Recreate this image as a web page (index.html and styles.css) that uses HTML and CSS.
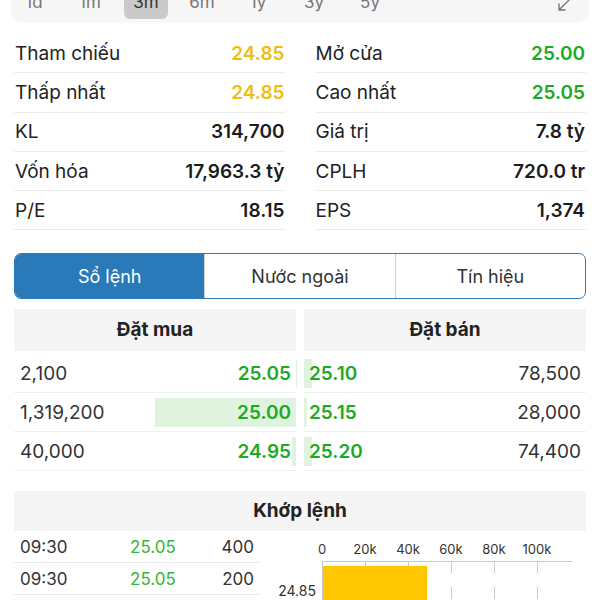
FILE: index.html
```html
<!DOCTYPE html>
<html lang="vi">
<head>
    <meta charset="UTF-8">
    <meta name="viewport" content="width=device-width, initial-scale=1.0">
    <title>Chi tiết cổ phiếu</title>
    <link rel="stylesheet" href="styles.css">
</head>
<body>
    <div class="period-bar">
        <span class="period">1d</span>
        <span class="period">1m</span>
        <span class="period active">3m</span>
        <span class="period">6m</span>
        <span class="period">1y</span>
        <span class="period">3y</span>
        <span class="period">5y</span>
        <span class="expand">
            <svg width="16" height="16" viewBox="0 0 16 16">
                <path d="M14 2 L3 13 M3 7 L3 13 L9 13" fill="none" stroke="#777" stroke-width="1.4" stroke-linecap="round" stroke-linejoin="round"/>
            </svg>
        </span>
    </div>

    <div class="stats">
        <div class="stat"><span class="label">Tham chiếu</span><span class="value ref">24.85</span></div>
        <div class="stat"><span class="label">Mở cửa</span><span class="value up">25.00</span></div>
        <div class="stat"><span class="label">Thấp nhất</span><span class="value ref">24.85</span></div>
        <div class="stat"><span class="label">Cao nhất</span><span class="value up">25.05</span></div>
        <div class="stat"><span class="label">KL</span><span class="value">314,700</span></div>
        <div class="stat"><span class="label">Giá trị</span><span class="value">7.8 tỷ</span></div>
        <div class="stat"><span class="label">Vốn hóa</span><span class="value">17,963.3 tỷ</span></div>
        <div class="stat"><span class="label">CPLH</span><span class="value">720.0 tr</span></div>
        <div class="stat"><span class="label">P/E</span><span class="value">18.15</span></div>
        <div class="stat"><span class="label">EPS</span><span class="value">1,374</span></div>
    </div>

    <div class="tabs">
        <div class="tab active">Sổ lệnh</div>
        <div class="tab">Nước ngoài</div>
        <div class="tab">Tín hiệu</div>
    </div>

    <div class="order-book">
        <div class="side bid">
            <div class="side-header">Đặt mua</div>
            <div class="order"><span class="bar" style="width: 0.1%"></span><span class="qty">2,100</span><span class="price">25.05</span></div>
            <div class="order"><span class="bar" style="width: 50%"></span><span class="qty">1,319,200</span><span class="price">25.00</span></div>
            <div class="order"><span class="bar" style="width: 1.5%"></span><span class="qty">40,000</span><span class="price">24.95</span></div>
        </div>
        <div class="side ask">
            <div class="side-header">Đặt bán</div>
            <div class="order"><span class="bar" style="width: 3%"></span><span class="price">25.10</span><span class="qty">78,500</span></div>
            <div class="order"><span class="bar" style="width: 1.1%"></span><span class="price">25.15</span><span class="qty">28,000</span></div>
            <div class="order"><span class="bar" style="width: 2.8%"></span><span class="price">25.20</span><span class="qty">74,400</span></div>
        </div>
    </div>

    <div class="matched">
        <div class="matched-header">Khớp lệnh</div>
        <div class="matched-body">
            <div class="trades">
                <div class="trade"><span>09:30</span><span class="trade-price">25.05</span><span class="trade-vol">400</span></div>
                <div class="trade"><span>09:30</span><span class="trade-price">25.05</span><span class="trade-vol">200</span></div>
            </div>
            <svg class="volume-chart" width="320" height="70" viewBox="0 0 320 70">
                <g class="axis-labels">
                    <text x="56" y="23">0</text>
                    <text x="99" y="23">20k</text>
                    <text x="142" y="23">40k</text>
                    <text x="185" y="23">60k</text>
                    <text x="228" y="23">80k</text>
                    <text x="271" y="23">100k</text>
                </g>
                <g stroke="#c9c9c9" stroke-width="1" stroke-dasharray="12 14">
                    <line x1="99.5" y1="30" x2="99.5" y2="70"/>
                    <line x1="142.5" y1="30" x2="142.5" y2="70"/>
                    <line x1="185.5" y1="30" x2="185.5" y2="70"/>
                    <line x1="228.5" y1="30" x2="228.5" y2="70"/>
                    <line x1="271.5" y1="30" x2="271.5" y2="70"/>
                </g>
                <line x1="56" y1="30.5" x2="306" y2="30.5" stroke="#c9c9c9"/>
                <line x1="56.5" y1="30" x2="56.5" y2="70" stroke="#c9c9c9"/>
                <rect x="57" y="35" width="104" height="40" fill="#ffc700"/>
                <text class="row-label" x="50" y="65">24.85</text>
            </svg>
        </div>
    </div>
</body>
</html>
```

FILE: styles.css
```css
body {
    margin: 0;
    width: 600px;
    height: 600px;
    overflow: hidden;
    background: #fff;
    font-family: Inter, "Noto Sans", sans-serif;
    color: #222;
}

/* period selector, top edge scrolled off */
.period-bar {
    display: flex;
    align-items: flex-end;
    gap: 12px;
    margin: -22px 12px 0;
    height: 43px;
    padding-bottom: 2px;
    box-sizing: border-box;
    background: #f6f6f6;
    border-radius: 10px;
    box-shadow: 0 1px 3px rgba(0, 0, 0, 0.06);
}

.period {
    width: 44px;
    height: 34px;
    line-height: 34px;
    text-align: center;
    font-size: 17px;
    color: #777;
    border-radius: 6px;
}

.period.active {
    background: #cacaca;
    color: #333;
}

.expand {
    margin-left: auto;
    margin-right: 16px;
    height: 22px;
}

.stats {
    display: grid;
    grid-template-columns: 1fr 1fr;
    column-gap: 29px;
    margin: 13px 14px 0;
}

.stat {
    display: flex;
    justify-content: space-between;
    align-items: center;
    height: 39.3px;
    box-sizing: border-box;
    border-bottom: 1px solid #ececec;
    font-size: 19px;
    padding: 0 1px;
}

.value {
    font-weight: 600;
    color: #1c1c1c;
}

.value.ref {
    color: #efbd12;
}

.value.up {
    color: #1caa22;
}

.tabs {
    display: flex;
    margin: 23px 14px 0;
    height: 46px;
    box-sizing: border-box;
    border: 1.5px solid #2f7cba;
    border-radius: 7px;
    overflow: hidden;
}

.tab {
    flex: 1;
    display: flex;
    align-items: center;
    justify-content: center;
    font-size: 18px;
    color: #333;
    border-left: 1px solid #cfcfcf;
}

.tab:first-child {
    border-left: none;
}

.tab.active {
    background: #2a79b8;
    color: #fff;
}

.order-book {
    display: flex;
    gap: 8px;
    margin: 10px 14px 0;
}

.side {
    flex: 1;
}

.side-header {
    height: 42px;
    line-height: 42px;
    text-align: center;
    background: #f5f5f5;
    font-size: 19px;
    font-weight: 700;
    margin-bottom: 3px;
}

.order {
    position: relative;
    display: flex;
    justify-content: space-between;
    align-items: center;
    height: 39px;
    box-sizing: border-box;
    border-bottom: 1px solid #f0f0f0;
    padding: 0 5px 0 6px;
    font-size: 19px;
    color: #333;
}

.order .bar {
    position: absolute;
    top: 5px;
    bottom: 4px;
    background: #dff3df;
}

.bid .bar {
    right: 0;
}

.ask .bar {
    left: 0;
}

.ask .order {
    padding: 0 5px 0 5px;
}

.order .qty,
.order .price {
    position: relative;
}

.order .price {
    font-weight: 600;
    color: #1caa22;
}

.matched {
    margin: 20px 14px 0;
}

.matched-header {
    height: 40px;
    line-height: 40px;
    text-align: center;
    background: #f5f5f5;
    font-size: 19px;
    font-weight: 700;
}

.matched-body {
    display: flex;
    gap: 6px;
}

.trades {
    width: 246px;
}

.trade {
    display: grid;
    grid-template-columns: 98px 70px 1fr;
    align-items: center;
    height: 31px;
    padding: 0 6px;
    border-bottom: 1px solid #ececec;
    font-size: 17px;
    color: #333;
}

.trade-price {
    text-align: center;
    color: #35b53a;
}

.trade-vol {
    text-align: right;
}

.volume-chart text {
    font-family: Inter, "Noto Sans", sans-serif;
    font-size: 13px;
    fill: #333;
}

.axis-labels text {
    text-anchor: middle;
}

.volume-chart .row-label {
    font-size: 14px;
    text-anchor: end;
}
```
